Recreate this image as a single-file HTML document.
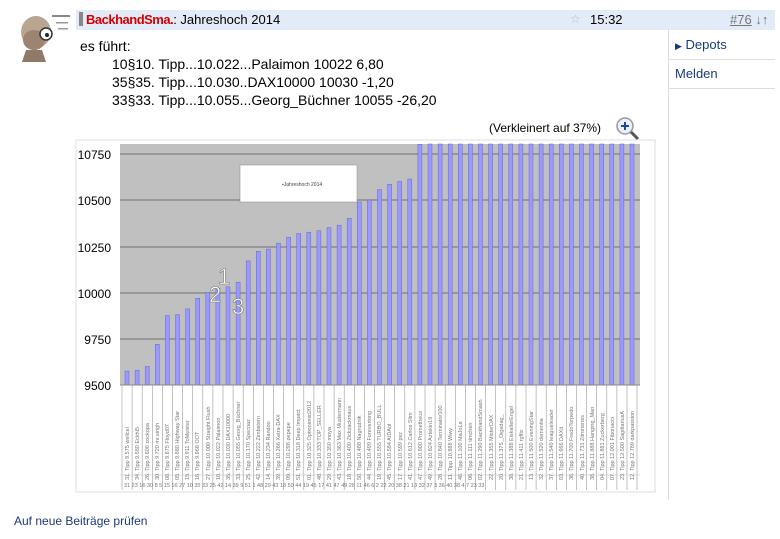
<!DOCTYPE html>
<html><head><meta charset="utf-8"><style>
body{margin:0;width:780px;height:539px;background:#fff;font-family:"Liberation Sans",Arial,sans-serif;position:relative;overflow:hidden;color:#000}
.abs{position:absolute}
.hdr{left:76px;top:10px;width:699px;height:20px;background:#e3ebf8}
.t{font-size:13px}
</style></head><body>
<svg class="abs" style="left:12px;top:10px" width="60" height="52" viewBox="0 0 60 52">
<ellipse cx="24" cy="22" rx="15" ry="16" fill="#b9a591"/>
<ellipse cx="22" cy="30" rx="11" ry="10" fill="#9c8470"/>
<circle cx="34" cy="24" r="6" fill="#fff" stroke="#333" stroke-width="1.5"/>
<circle cx="35" cy="25" r="2" fill="#222"/>
<path d="M14 40 L10 52 L34 52 L30 40Z" fill="#8f7a68"/>
<rect x="40" y="5" width="18" height="2" fill="#888"/><rect x="44" y="12" width="12" height="1.5" fill="#999"/><rect x="46" y="18" width="10" height="1.5" fill="#999"/>
</svg>
<div class="abs hdr"></div>
<div class="abs" style="left:79px;top:12px;width:4px;height:14px;background:#888"></div>
<div class="abs t" style="left:86px;top:12px"><b style="color:#d40000;font-size:13px;letter-spacing:-0.5px">BackhandSma.</b>: Jahreshoch 2014</div>
<div class="abs" style="left:570px;top:12px;color:#bbb;font-size:12px">☆</div>
<div class="abs t" style="left:590px;top:12px">15:32</div>
<div class="abs t" style="left:730px;top:12px;color:#777"><u>#76</u> ↓↑</div>
<div class="abs" style="left:668px;top:30px;width:1px;height:470px;background:#ddd"></div>
<div class="abs t" style="left:675px;top:37px;color:#1a3a7a"><span style="font-size:9px">▶</span> Depots</div>
<div class="abs" style="left:669px;top:59px;width:106px;height:1px;background:#ddd"></div>
<div class="abs t" style="left:675px;top:66px;color:#1a3a7a">Melden</div>
<div class="abs" style="left:669px;top:88px;width:106px;height:1px;background:#ddd"></div>
<div class="abs" style="left:80px;top:38px;font-size:14px">es führt:</div>
<div class="abs" style="left:112px;top:55px;line-height:18px;font-size:14px">10§10. Tipp...10.022...Palaimon 10022 6,80<br>35§35. Tipp...10.030..DAX10000 10030 -1,20<br>33§33. Tipp...10.055...Georg_Büchner 10055 -26,20</div>
<div class="abs" style="left:489px;top:121px;font-size:12px">(Verkleinert auf 37%)</div>
<svg class="abs" style="left:615px;top:116px" width="26" height="24"><circle cx="10" cy="10" r="8" fill="#eef" stroke="#999" stroke-width="1.5"/><path d="M6 10h8M10 6v8" stroke="#1a4aa0" stroke-width="2"/><path d="M16 16l7 7" stroke="#555" stroke-width="3"/></svg>
<svg class="abs" style="left:0;top:0" width="780" height="539" id="ch">
<rect x="76" y="140" width="579" height="352" fill="#fff" stroke="#ddd"/>
<rect x="120" y="144" width="520" height="241" fill="#c0c0c0"/>
<g stroke="#808080" stroke-width="1.2"><line x1="120" y1="154" x2="640" y2="154"/><line x1="120" y1="200" x2="640" y2="200"/><line x1="120" y1="247" x2="640" y2="247"/><line x1="120" y1="293" x2="640" y2="293"/><line x1="120" y1="339" x2="640" y2="339"/></g>
<g font-size="12" text-anchor="end" font-family="Liberation Sans"><text x="111" y="159">10750</text><text x="111" y="205">10500</text><text x="111" y="252">10250</text><text x="111" y="298">10000</text><text x="111" y="344">9750</text><text x="111" y="390">9500</text></g>
<g id="bars" fill="#9999ff" stroke="#6666cc" stroke-width="0.5"></g>
<rect x="240" y="165" width="117" height="37" fill="#fff" stroke="#888" stroke-width="0.5"/>
<text x="282" y="186" font-size="5" fill="#444">▪Jahreshoch 2014</text>
<g font-size="22" fill="#fff" stroke="#777" stroke-width="0.6" font-family="Liberation Sans"><text x="218" y="284">1</text><text x="209" y="302">2</text><text x="232" y="314">3</text></g>
<g id="grid" stroke="#999" stroke-width="0.6"></g>
<line x1="120" y1="385" x2="640" y2="385" stroke="#888"/>
<line x1="120" y1="475" x2="640" y2="475" stroke="#bbb" stroke-width="0.5"/>
<g font-size="5.5" fill="#777" id="lbl">
<text transform="translate(129,480) rotate(-90)">31. Tipp 9.575 wellcel</text>
<text transform="translate(139,480) rotate(-90)">34. Tipp 9.580 Eckhl5</text>
<text transform="translate(149,480) rotate(-90)">26. Tipp 9.600 zockopa</text>
<text transform="translate(159,480) rotate(-90)">30. Tipp 9.720 mr.singh</text>
<text transform="translate(169,480) rotate(-90)">08. Tipp 9.875 Floyd07</text>
<text transform="translate(179,480) rotate(-90)">05. Tipp 9.880 Highway Star</text>
<text transform="translate(189,480) rotate(-90)">15. Tipp 9.911 ToMeister</text>
<text transform="translate(199,480) rotate(-90)">16. Tipp 9.968 OOT</text>
<text transform="translate(210,480) rotate(-90)">27. Tipp 10.000 Straight Flush</text>
<text transform="translate(220,480) rotate(-90)">10. Tipp 10.022 Palaimon</text>
<text transform="translate(230,480) rotate(-90)">35. Tipp 10.030 DAX10000</text>
<text transform="translate(240,480) rotate(-90)">33. Tipp 10.055 Georg_Büchner</text>
<text transform="translate(250,480) rotate(-90)">25. Tipp 10.170 Specnaz</text>
<text transform="translate(260,480) rotate(-90)">42. Tipp 10.222 Zimbstern</text>
<text transform="translate(270,480) rotate(-90)">14. Tipp 10.234 Randoo</text>
<text transform="translate(280,480) rotate(-90)">39. Tipp 10.266 Xetra-DAX</text>
<text transform="translate(290,480) rotate(-90)">09. Tipp 10.298 pepepe</text>
<text transform="translate(300,480) rotate(-90)">51. Tipp 10.318 Deep Impact</text>
<text transform="translate(311,480) rotate(-90)">01. Tipp 10.325 Optionimist2012</text>
<text transform="translate(321,480) rotate(-90)">48. Tipp 10.333 TOP_SELLER</text>
<text transform="translate(331,480) rotate(-90)">29. Tipp 10.350 moya</text>
<text transform="translate(341,480) rotate(-90)">43. Tipp 10.363 Max Mustermann</text>
<text transform="translate(351,480) rotate(-90)">18. Tipp 10.400 Zickzackmaus</text>
<text transform="translate(361,480) rotate(-90)">50. Tipp 10.488 Nagrudnik</text>
<text transform="translate(371,480) rotate(-90)">44. Tipp 10.499 Forevertong</text>
<text transform="translate(381,480) rotate(-90)">19. Tipp 10.555 TURBO_BULL</text>
<text transform="translate(391,480) rotate(-90)">45. Tipp 10.584 AIDAol</text>
<text transform="translate(402,480) rotate(-90)">17. Tipp 10.599 psz</text>
<text transform="translate(412,480) rotate(-90)">41. Tipp 10.612 Carlos Slim</text>
<text transform="translate(422,480) rotate(-90)">47. Tipp 10.800 Prometheus</text>
<text transform="translate(432,480) rotate(-90)">49. Tipp 10.824 Aztekin19</text>
<text transform="translate(442,480) rotate(-90)">28. Tipp 10.840 Terminator100</text>
<text transform="translate(452,480) rotate(-90)">11. Tipp 10.888 Wiwy</text>
<text transform="translate(462,480) rotate(-90)">46. Tipp 11.100 MaJoLa</text>
<text transform="translate(472,480) rotate(-90)">06. Tipp 11.111 timchen</text>
<text transform="translate(482,480) rotate(-90)">02. Tipp 11.290 BackhandSmash</text>
<text transform="translate(493,480) rotate(-90)">22. Tipp 11.355 MisterDAX</text>
<text transform="translate(503,480) rotate(-90)">20. Tipp 11.375 _Digedag_</text>
<text transform="translate(513,480) rotate(-90)">38. Tipp 11.388 EiskalterEngel</text>
<text transform="translate(523,480) rotate(-90)">21. Tipp 11.411 rgffix</text>
<text transform="translate(533,480) rotate(-90)">13. Tipp 11.500 EveningStar</text>
<text transform="translate(543,480) rotate(-90)">32. Tipp 11.520 dementia</text>
<text transform="translate(553,480) rotate(-90)">37. Tipp 11.540 leagueleader</text>
<text transform="translate(563,480) rotate(-90)">03. Tipp 11.666 DAXit</text>
<text transform="translate(573,480) rotate(-90)">36. Tipp 11.700 FredoTorpedo</text>
<text transform="translate(584,480) rotate(-90)">40. Tipp 11.731 Zitronenes</text>
<text transform="translate(594,480) rotate(-90)">38. Tipp 11.888 Hanging_Man</text>
<text transform="translate(604,480) rotate(-90)">04. Tipp 11.881 Zuckerberg</text>
<text transform="translate(614,480) rotate(-90)">07. Tipp 12.001 Fibonacci</text>
<text transform="translate(624,480) rotate(-90)">23. Tipp 12.500 SagittariusA</text>
<text transform="translate(634,480) rotate(-90)">12. Tipp 12.789 darkpassion</text>
</g>
<g font-size="5.5" fill="#777">
<text x="124" y="487">31 23 16 30 8 5 15 16 27 10 35 33 25 42 14 39 9 51 1 48 29 43 18 50 44 19 45 17 41 47 49 28 11 46 6 2 22 20 38 21 13 32 37 3 36 40 38 4 7 23 33</text>
</g>
</svg>
<div class="abs" style="left:14px;top:514px;font-size:12px;color:#1a3a7a">Auf neue Beiträge prüfen</div>
<script>
var v=[9575,9580,9600,9720,9875,9880,9911,9968,10000,10022,10030,10055,10170,10222,10234,10266,10298,10318,10325,10333,10350,10363,10400,10488,10499,10555,10584,10599,10612,10800];
var b=document.getElementById('bars'),g=document.getElementById('grid'),ns='http://www.w3.org/2000/svg';
for(var i=0;i<51;i++){var x=127+i*10.1;var val=i<v.length?v[i]:11000;var y=Math.max(144,385-(val-9500)/250*46.3);
var r=document.createElementNS(ns,'rect');r.setAttribute('x',x-2);r.setAttribute('y',y);r.setAttribute('width',4);r.setAttribute('height',385-y);b.appendChild(r);
var l=document.createElementNS(ns,'line');var lx=x-5;l.setAttribute('x1',lx);l.setAttribute('x2',lx);l.setAttribute('y1',385);l.setAttribute('y2',490);g.appendChild(l);}
var l=document.createElementNS(ns,'line');l.setAttribute('x1',637);l.setAttribute('x2',637);l.setAttribute('y1',385);l.setAttribute('y2',490);g.appendChild(l);
</script>
</body></html>
